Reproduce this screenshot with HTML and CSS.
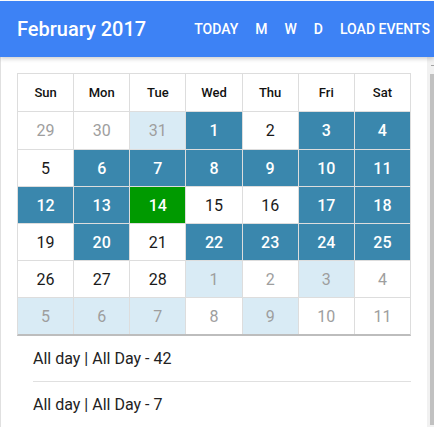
FILE: index.html
```html
<!DOCTYPE html>
<html>
<head>
<meta charset="utf-8">
<link rel="stylesheet" href="styles.css">
</head>
<body>
<div class="app">
  <header class="toolbar">
    <h1 class="title">February 2017</h1>
    <nav class="actions">
      <span class="btn">Today</span>
      <span class="btn">M</span>
      <span class="btn">W</span>
      <span class="btn">D</span>
      <span class="btn">Load events</span>
    </nav>
  </header>
  <div class="main">
    <div class="content">
      <div class="cal">
        <div class="dow">Sun</div><div class="dow">Mon</div><div class="dow">Tue</div><div class="dow">Wed</div><div class="dow">Thu</div><div class="dow">Fri</div><div class="dow">Sat</div>

        <div class="day out">29</div><div class="day out">30</div><div class="day out tint">31</div><div class="day ev">1</div><div class="day">2</div><div class="day ev">3</div><div class="day ev">4</div>

        <div class="day">5</div><div class="day ev">6</div><div class="day ev">7</div><div class="day ev">8</div><div class="day ev">9</div><div class="day ev">10</div><div class="day ev">11</div>

        <div class="day ev">12</div><div class="day ev">13</div><div class="day today">14</div><div class="day">15</div><div class="day">16</div><div class="day ev">17</div><div class="day ev">18</div>

        <div class="day">19</div><div class="day ev">20</div><div class="day">21</div><div class="day ev">22</div><div class="day ev">23</div><div class="day ev">24</div><div class="day ev">25</div>

        <div class="day">26</div><div class="day">27</div><div class="day">28</div><div class="day out tint">1</div><div class="day out">2</div><div class="day out tint">3</div><div class="day out">4</div>

        <div class="day out tint">5</div><div class="day out tint">6</div><div class="day out tint">7</div><div class="day out">8</div><div class="day out tint">9</div><div class="day out">10</div><div class="day out">11</div>
      </div>
      <ul class="events">
        <li class="event">All day | All Day - 42</li>
        <li class="event">All day | All Day - 7</li>
      </ul>
    </div>
    <div class="scrollbar">
      <div class="arrow"></div>
      <div class="thumb"></div>
    </div>
  </div>
</div>
</body>
</html>
```
FILE: styles.css
```css
* { box-sizing: border-box; }
html, body { margin: 0; padding: 0; background: #fff; }
body {
  font-family: Roboto, "Noto Sans", "Liberation Sans", sans-serif;
  color: #212121;
  overflow: hidden;
}
.app { padding-top: 1px; height: 427px; display: flex; flex-direction: column; }
.toolbar {
  height: 56px;
  background: #3d82f5;
  display: flex;
  align-items: center;
  justify-content: space-between;
  padding: 0 4px 0 17px;
  box-shadow: 0 2px 4px rgba(0,0,0,0.18);
  position: relative;
  z-index: 1;
}
.title {
  margin: 0;
  font-size: 20px;
  font-weight: 500;
  color: #fff;
  letter-spacing: 0;
}
.actions { display: flex; gap: 17px; }
.btn {
  color: #fff;
  font-size: 14px;
  font-weight: 500;
  text-transform: uppercase;
}
.main { flex: 1; display: flex; min-height: 0; }
.content {
  flex: 1;
  border-left: 1px solid #e0e0e0;
  padding: 16px 16px 0 16px;
}
.cal {
  display: grid;
  grid-template-columns: repeat(7, 1fr);
  grid-template-rows: 37px 37px repeat(5, 36px);
  gap: 1px;
  background: #dddddd;
  border: 1px solid #dddddd;
  border-bottom: 2px solid #bdbdbd;
}
.dow {
  background: #fff;
  display: flex;
  align-items: center;
  justify-content: center;
  font-size: 13px;
  font-weight: 500;
  color: #111;
}
.day {
  background: #fff;
  display: flex;
  align-items: center;
  justify-content: center;
  font-size: 16px;
  color: #1a1a1a;
}
.day.out { color: #9e9e9e; }
.day.tint { background: #d9ebf5; }
.day.ev { background: #3a87ad; color: #fff; font-weight: 500; }
.day.today { background: #009a00; color: #fff; font-weight: 500; }
.events { list-style: none; margin: 0; padding: 0; }
.event {
  height: 46px;
  display: flex;
  align-items: center;
  padding-left: 16px;
  font-size: 16px;
  color: #222;
}
.event:first-child { height: 45px; }
.event + .event { border-top: 1px solid #e0e0e0; margin-left: 16px; padding-left: 0; }
.scrollbar {
  width: 7px;
  background: #f1f1f1;
  display: flex;
  flex-direction: column;
  align-items: flex-end;
  padding-top: 8px;
}
.arrow {
  width: 3px;
  height: 1px;
  background: #a3a3a3;
}
.thumb {
  margin-top: 8px;
  width: 4px;
  height: 351px;
  background: #c1c1c1;
}
```
